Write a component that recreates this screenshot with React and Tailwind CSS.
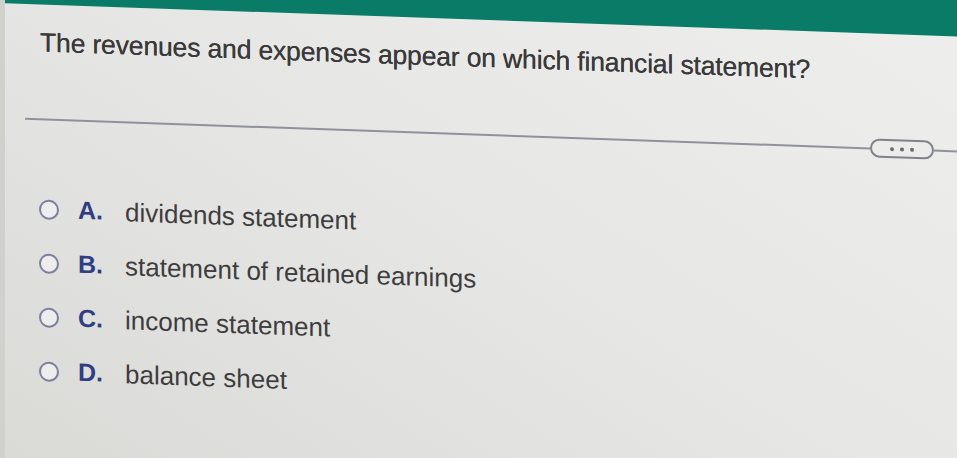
import React from 'react';

const options = [
    { letter: 'A.', text: 'dividends statement' },
    { letter: 'B.', text: 'statement of retained earnings' },
    { letter: 'C.', text: 'income statement' },
    { letter: 'D.', text: 'balance sheet' },
];

const App = () => {
    return (
        <div className="w-[957px] h-[458px] overflow-hidden bg-[#e2e2e0] font-['Liberation_Sans',Arial,sans-serif]">
            {/* page is photographed at a slight tilt */}
            <div className="w-[1000px] h-[600px] -mt-[60px] origin-top-left skew-y-2 bg-linear-to-bl from-[#efefed] via-[#e6e6e4] to-[#d8d8d5] border-l-[5px] border-[#d0d0cd]">
                {/* Header bar */}
                <div className="h-[63px] bg-[#0a7b67]" />

                {/* Question */}
                <div className="pl-[35px] pt-[23px] text-[26.5px] leading-[30px] text-[#3a3a3a] tracking-[-0.15px] [text-shadow:0_0_0.6px_#3a3a3a]">
                    The revenues and expenses appear on which financial statement?
                </div>

                {/* Divider with more button */}
                <div className="mt-[52px] flex items-center h-[19px] pl-[20px]">
                    <div className="w-[845px] h-[2px] bg-[#8f929d]" />
                    <button className="w-[64px] h-[19px] rounded-full border-2 border-[#80828a] flex items-center justify-center gap-[6px] bg-[#ececea]">
                        <span className="w-[4px] h-[4px] rounded-full bg-[#6a6a70]" />
                        <span className="w-[4px] h-[4px] rounded-full bg-[#6a6a70]" />
                        <span className="w-[4px] h-[4px] rounded-full bg-[#6a6a70]" />
                    </button>
                    <div className="flex-1 h-[2px] bg-[#8f929d]" />
                </div>

                {/* Answer choices */}
                <div className="mt-[54px] pl-[34px]">
                    {options.map((opt) => (
                        <label key={opt.letter} className="h-[54px] flex items-center cursor-pointer">
                            <span className="w-[20px] h-[20px] rounded-full border-2 border-[#7b7fa0] bg-[#ededeb]" />
                            <span className="ml-[19px] w-[47px] text-[25px] font-bold text-[#2f3d85]">
                                {opt.letter}
                            </span>
                            <span className="text-[26px] text-[#3d3d3d]">{opt.text}</span>
                        </label>
                    ))}
                </div>
            </div>
        </div>
    );
};

export default App;
